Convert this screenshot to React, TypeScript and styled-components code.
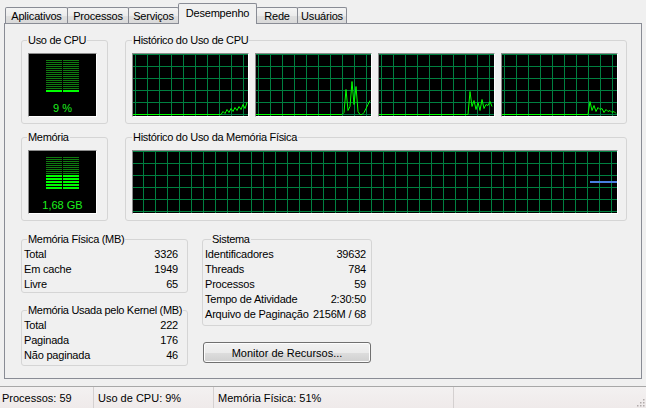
import React from 'react';
import styled, { createGlobalStyle } from 'styled-components';

const GlobalStyle = createGlobalStyle`
  html, body {
    margin: 0;
    padding: 0;
  }
  body {
    background: #f0f0f0;
    font-family: "Liberation Sans", Arial, sans-serif;
    font-size: 11px;
    color: #000;
  }
`;

const Window = styled.div`
  width: 646px;
  height: 408px;
  display: flex;
  flex-direction: column;
  background: #f0f0f0;
  overflow: hidden;
`;

const TabStrip = styled.div`
  display: flex;
  align-items: flex-end;
  height: 23px;
  padding-left: 5px;
  position: relative;
  z-index: 1;
`;

type TabProps = {
  $active?: boolean;
  $w: number;
};

const Tab = styled.div<TabProps>`
  box-sizing: border-box;
  width: ${(p) => p.$w}px;
  height: ${(p) => (p.$active ? 21 : 16)}px;
  margin-left: -1px;
  margin-bottom: ${(p) => (p.$active ? -1 : 0)}px;
  display: flex;
  align-items: center;
  justify-content: center;
  padding-bottom: ${(p) => (p.$active ? 2 : 0)}px;
  border: 1px solid #898c95;
  border-bottom: none;
  border-radius: 2px 2px 0 0;
  letter-spacing: -0.2px;
  white-space: nowrap;
  background: ${(p) =>
    p.$active
      ? '#f0f0f0'
      : 'linear-gradient(#f4f4f4, #ececec 50%, #e0e0e0 51%, #d9d9d9)'};
  position: relative;
  z-index: ${(p) => (p.$active ? 2 : 1)};

  &:first-child {
    margin-left: 0;
  }
`;

const Panel = styled.div`
  box-sizing: border-box;
  margin-left: 4px;
  width: 638px;
  height: 356px;
  border: 1px solid #898c95;
  background: #f0f0f0;
  padding: 10px 0 0 16px;
  display: flex;
  flex-direction: column;
`;

const TopRow = styled.div`
  display: grid;
  grid-template-columns: 87px 502px;
  column-gap: 17px;
  margin-bottom: 7px;
`;

const LowerRow = styled.div`
  display: grid;
  grid-template-columns: 167px 170px;
  column-gap: 14px;
  margin-top: 5px;
  align-items: start;
`;

const Column = styled.div<{ $gap: number }>`
  display: flex;
  flex-direction: column;
  gap: ${(p) => p.$gap}px;
`;

const Group = styled.fieldset`
  box-sizing: border-box;
  margin: 0;
  padding: 0;
  min-width: 0;
  border: 1px solid #d5d5d5;
  border-radius: 3px;
`;

const Legend = styled.legend<{ $x: number }>`
  margin-left: ${(p) => p.$x}px;
  padding: 0 1px;
  line-height: 13px;
  letter-spacing: -0.3px;
  white-space: nowrap;
`;

const GroupBody = styled.div<{ $pad: string }>`
  padding: ${(p) => p.$pad};
`;

const GraphRow = styled.div`
  display: flex;
  gap: 6px;
`;

const Sunken = styled.div`
  box-sizing: border-box;
  border: 1px solid;
  border-color: #8c8c8c #ffffff #ffffff #8c8c8c;
  background: #000;
`;

const GraphBox = styled(Sunken)<{ $w: number }>`
  width: ${(p) => p.$w}px;
  height: 64px;

  svg {
    display: block;
  }
`;

const Meter = styled(Sunken)`
  width: 69px;
  height: 64px;
  display: flex;
  flex-direction: column;
  align-items: center;
  padding-top: 6px;

  svg {
    display: block;
  }
`;

const MeterText = styled.div`
  margin-top: 9px;
  color: #1cf01c;
  line-height: 13px;
`;

const DataRow = styled.div`
  display: flex;
  justify-content: space-between;
  gap: 4px;
  height: 15px;
  line-height: 15px;
  letter-spacing: -0.2px;
  white-space: nowrap;
`;

const Button = styled.div`
  box-sizing: border-box;
  margin: 6px 0 0 1px;
  width: 168px;
  height: 21px;
  border: 1px solid #707070;
  border-radius: 3px;
  background: linear-gradient(#f2f2f2, #ebebeb 50%, #dddddd 51%, #cfcfcf);
  box-shadow: inset 0 0 0 1px #fcfcfc;
  display: flex;
  align-items: center;
  justify-content: center;
`;

const StatusBar = styled.div`
  margin-top: 7px;
  flex: 1;
  display: flex;
  border-top: 1px solid #a8a8a8;
  background: linear-gradient(#f3f1f1, #efeaea);
  position: relative;
`;

const Pane = styled.div<{ $w?: number; $pad: number }>`
  box-sizing: border-box;
  width: ${(p) => (p.$w ? `${p.$w}px` : 'auto')};
  flex: ${(p) => (p.$w ? 'none' : 1)};
  padding-left: ${(p) => p.$pad}px;
  display: flex;
  align-items: center;
  border-right: 1px solid #d4d0d0;
  white-space: nowrap;

  &:last-of-type {
    border-right: none;
  }
`;

const Grip = styled.svg`
  position: absolute;
  right: 1px;
  bottom: 1px;
`;

const GRID = '#008040';
const LINE = '#00ff00';
const DIM = '#107a10';

function Grid({ w, h, ox }: { w: number; h: number; ox: number }) {
  const v: number[] = [];
  for (let x = ox; x < w; x += 12) v.push(x + 0.5);
  const hz: number[] = [];
  for (let y = 0; y < h; y += 12) hz.push(y + 0.5);
  return (
    <g stroke={GRID} strokeWidth={1} shapeRendering="crispEdges">
      {v.map((x) => (
        <line key={`v${x}`} x1={x} y1={0} x2={x} y2={h} />
      ))}
      {hz.map((y) => (
        <line key={`h${y}`} x1={0} y1={y} x2={w} y2={y} />
      ))}
    </g>
  );
}

function CpuGraph({ start, values }: { start: number; values: number[] }) {
  const W = 115;
  const H = 62;
  const base = 60.5;
  const pts = [`0,${base}`, `${start},${base}`]
    .concat(values.map((v, i) => `${start + i * 2},${base - v}`))
    .join(' ');
  return (
    <GraphBox $w={117}>
      <svg width={W} height={H}>
        <Grid w={W} h={H} ox={2} />
        <polyline points={pts} fill="none" stroke={LINE} strokeWidth={1} />
      </svg>
    </GraphBox>
  );
}

function MemGraph() {
  const W = 484;
  const H = 62;
  return (
    <GraphBox $w={486}>
      <svg width={W} height={H}>
        <Grid w={W} h={H} ox={10} />
        <line x1={457} y1={31} x2={W} y2={31} stroke="#4a7fe0" strokeWidth={2} />
      </svg>
    </GraphBox>
  );
}

// unlit part is a fine stripe texture, lit rows are 2px bars on a 3px pitch
function Bars({ lit }: { lit: number }) {
  const rows = 11;
  const dimH = (rows - lit) * 3 - 1;
  const dimLines = Array.from({ length: Math.ceil(dimH / 2) }, (_, i) => i * 2);
  const litRows = Array.from({ length: lit }, (_, i) => dimH + 1 + i * 3);
  return (
    <svg width={33} height={33} shapeRendering="crispEdges">
      {dimLines.map((y) => (
        <g key={`d${y}`} fill={DIM}>
          <rect x={0} y={y} width={16} height={1} />
          <rect x={17} y={y} width={16} height={1} />
        </g>
      ))}
      {litRows.map((y) => (
        <g key={`l${y}`} fill={LINE}>
          <rect x={0} y={y} width={16} height={2} />
          <rect x={17} y={y} width={16} height={2} />
        </g>
      ))}
    </svg>
  );
}

const tabs = [
  { label: 'Aplicativos', w: 63 },
  { label: 'Processos', w: 62 },
  { label: 'Serviços', w: 51 },
  { label: 'Desempenho', w: 79, active: true },
  { label: 'Rede', w: 42 },
  { label: 'Usuários', w: 50 },
];

const cpuGraphs = [
  { start: 88, values: [0, 3, 1, 5, 2, 6, 3, 7, 4, 8, 5, 10, 6, 12] },
  { start: 84, values: [0, 0, 2, 25, 4, 8, 33, 10, 28, 3, 0, 0, 2, 6, 10, 14] },
  { start: 87, values: [0, 0, 23, 8, 14, 5, 12, 4, 15, 6, 10, 9, 13, 8] },
  { start: 84, values: [0, 0, 13, 4, 9, 3, 7, 5, 6, 2, 5, 3, 4, 2, 3, 1] },
];

const physical = [
  ['Total', '3326'],
  ['Em cache', '1949'],
  ['Livre', '65'],
];

const kernel = [
  ['Total', '222'],
  ['Paginada', '176'],
  ['Não paginada', '46'],
];

const system = [
  ['Identificadores', '39632'],
  ['Threads', '784'],
  ['Processos', '59'],
  ['Tempo de Atividade', '2:30:50'],
  ['Arquivo de Paginação', '2156M / 68'],
];

function Rows({ data }: { data: string[][] }) {
  return (
    <>
      {data.map(([k, v]) => (
        <DataRow key={k}>
          <span>{k}</span>
          <span>{v}</span>
        </DataRow>
      ))}
    </>
  );
}

export default function App() {
  return (
    <>
      <GlobalStyle />
      <Window>
        <TabStrip>
          {tabs.map((t) => (
            <Tab key={t.label} $w={t.w} $active={t.active}>
              {t.label}
            </Tab>
          ))}
        </TabStrip>

        <Panel>
          <TopRow>
            <Group>
              <Legend $x={5}>Uso de CPU</Legend>
              <GroupBody $pad="6px 0 6px 6px">
                <Meter>
                  <Bars lit={1} />
                  <MeterText>9 %</MeterText>
                </Meter>
              </GroupBody>
            </Group>
            <Group>
              <Legend $x={6}>Histórico do Uso de CPU</Legend>
              <GroupBody $pad="6px 0 6px 6px">
                <GraphRow>
                  {cpuGraphs.map((g, i) => (
                    <CpuGraph key={i} start={g.start} values={g.values} />
                  ))}
                </GraphRow>
              </GroupBody>
            </Group>
          </TopRow>

          <TopRow>
            <Group>
              <Legend $x={5}>Memória</Legend>
              <GroupBody $pad="6px 0 6px 6px">
                <Meter>
                  <Bars lit={5} />
                  <MeterText>1,68 GB</MeterText>
                </Meter>
              </GroupBody>
            </Group>
            <Group>
              <Legend $x={6}>Histórico do Uso da Memória Física</Legend>
              <GroupBody $pad="6px 0 6px 6px">
                <MemGraph />
              </GroupBody>
            </Group>
          </TopRow>

          <LowerRow>
            <Column $gap={11}>
              <Group>
                <Legend $x={5}>Memória Física (MB)</Legend>
                <GroupBody $pad="1px 9px 0 2px">
                  <Rows data={physical} />
                </GroupBody>
              </Group>
              <Group>
                <Legend $x={5}>Memória Usada pelo Kernel (MB)</Legend>
                <GroupBody $pad="1px 9px 2px 2px">
                  <Rows data={kernel} />
                </GroupBody>
              </Group>
            </Column>
            <Column $gap={10}>
              <Group>
                <Legend $x={8}>Sistema</Legend>
                <GroupBody $pad="1px 5px 3px 2px">
                  <Rows data={system} />
                </GroupBody>
              </Group>
              <Button>Monitor de Recursos...</Button>
            </Column>
          </LowerRow>
        </Panel>

        <StatusBar>
          <Pane $w={94} $pad={2}>Processos: 59</Pane>
          <Pane $w={120} $pad={4}>Uso de CPU: 9%</Pane>
          <Pane $w={240} $pad={4}>Memória Física: 51%</Pane>
          <Pane $pad={0} />
          <Grip width={10} height={10}>
            {[
              [8, 2],
              [8, 5],
              [5, 5],
              [8, 8],
              [5, 8],
              [2, 8],
            ].map(([x, y]) => (
              <rect key={`${x}-${y}`} x={x} y={y} width={1.5} height={1.5} fill="#b0aaaa" />
            ))}
          </Grip>
        </StatusBar>
      </Window>
    </>
  );
}
